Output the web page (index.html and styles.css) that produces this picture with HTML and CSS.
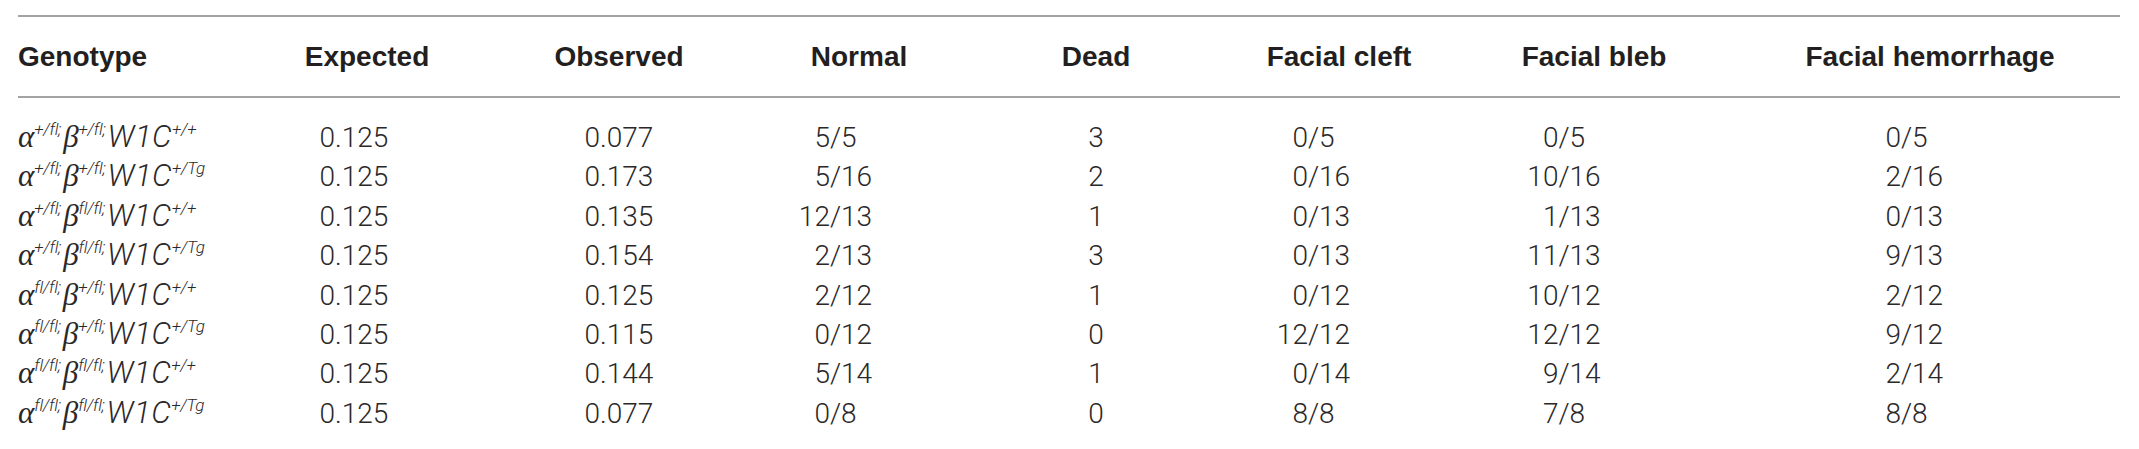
FILE: index.html
```html
<!DOCTYPE html>
<html lang="en">
<head>
<meta charset="utf-8">
<title>Genotype table</title>
<link rel="stylesheet" href="styles.css">
</head>
<body>
<table class="gt">
  <colgroup>
    <col class="c-geno"><col class="c-exp"><col class="c-obs"><col class="c-norm"><col class="c-dead"><col class="c-cleft"><col class="c-bleb"><col class="c-hem">
  </colgroup>
  <thead>
    <tr>
      <th class="h-geno">Genotype</th>
      <th>Expected</th>
      <th>Observed</th>
      <th>Normal</th>
      <th>Dead</th>
      <th>Facial cleft</th>
      <th>Facial bleb</th>
      <th>Facial hemorrhage</th>
    </tr>
  </thead>
  <tbody>
    <tr>
      <td class="geno"><span class="gr">α</span><sup>+/fl;</sup><span class="gr">β</span><sup>+/fl;</sup><span class="w">W1C</span><sup>+/+</sup></td>
      <td class="exp">0.125</td><td>0.077</td>
      <td class="norm"><span class="frac"><span class="n">5</span>/<span class="d">5</span></span></td>
      <td>3</td>
      <td class="cleft"><span class="frac"><span class="n">0</span>/<span class="d">5</span></span></td>
      <td class="bleb"><span class="frac"><span class="n">0</span>/<span class="d">5</span></span></td>
      <td class="hem"><span class="frac"><span class="n">0</span>/<span class="d">5</span></span></td>
    </tr>
    <tr>
      <td class="geno"><span class="gr">α</span><sup>+/fl;</sup><span class="gr">β</span><sup>+/fl;</sup><span class="w">W1C</span><sup>+/Tg</sup></td>
      <td class="exp">0.125</td><td>0.173</td>
      <td class="norm"><span class="frac"><span class="n">5</span>/<span class="d">16</span></span></td>
      <td>2</td>
      <td class="cleft"><span class="frac"><span class="n">0</span>/<span class="d">16</span></span></td>
      <td class="bleb"><span class="frac"><span class="n">10</span>/<span class="d">16</span></span></td>
      <td class="hem"><span class="frac"><span class="n">2</span>/<span class="d">16</span></span></td>
    </tr>
    <tr>
      <td class="geno"><span class="gr">α</span><sup>+/fl;</sup><span class="gr">β</span><sup>fl/fl;</sup><span class="w">W1C</span><sup>+/+</sup></td>
      <td class="exp">0.125</td><td>0.135</td>
      <td class="norm"><span class="frac"><span class="n">12</span>/<span class="d">13</span></span></td>
      <td>1</td>
      <td class="cleft"><span class="frac"><span class="n">0</span>/<span class="d">13</span></span></td>
      <td class="bleb"><span class="frac"><span class="n">1</span>/<span class="d">13</span></span></td>
      <td class="hem"><span class="frac"><span class="n">0</span>/<span class="d">13</span></span></td>
    </tr>
    <tr>
      <td class="geno"><span class="gr">α</span><sup>+/fl;</sup><span class="gr">β</span><sup>fl/fl;</sup><span class="w">W1C</span><sup>+/Tg</sup></td>
      <td class="exp">0.125</td><td>0.154</td>
      <td class="norm"><span class="frac"><span class="n">2</span>/<span class="d">13</span></span></td>
      <td>3</td>
      <td class="cleft"><span class="frac"><span class="n">0</span>/<span class="d">13</span></span></td>
      <td class="bleb"><span class="frac"><span class="n">11</span>/<span class="d">13</span></span></td>
      <td class="hem"><span class="frac"><span class="n">9</span>/<span class="d">13</span></span></td>
    </tr>
    <tr>
      <td class="geno"><span class="gr">α</span><sup>fl/fl;</sup><span class="gr">β</span><sup>+/fl;</sup><span class="w">W1C</span><sup>+/+</sup></td>
      <td class="exp">0.125</td><td>0.125</td>
      <td class="norm"><span class="frac"><span class="n">2</span>/<span class="d">12</span></span></td>
      <td>1</td>
      <td class="cleft"><span class="frac"><span class="n">0</span>/<span class="d">12</span></span></td>
      <td class="bleb"><span class="frac"><span class="n">10</span>/<span class="d">12</span></span></td>
      <td class="hem"><span class="frac"><span class="n">2</span>/<span class="d">12</span></span></td>
    </tr>
    <tr>
      <td class="geno"><span class="gr">α</span><sup>fl/fl;</sup><span class="gr">β</span><sup>+/fl;</sup><span class="w">W1C</span><sup>+/Tg</sup></td>
      <td class="exp">0.125</td><td>0.115</td>
      <td class="norm"><span class="frac"><span class="n">0</span>/<span class="d">12</span></span></td>
      <td>0</td>
      <td class="cleft"><span class="frac"><span class="n">12</span>/<span class="d">12</span></span></td>
      <td class="bleb"><span class="frac"><span class="n">12</span>/<span class="d">12</span></span></td>
      <td class="hem"><span class="frac"><span class="n">9</span>/<span class="d">12</span></span></td>
    </tr>
    <tr>
      <td class="geno"><span class="gr">α</span><sup>fl/fl;</sup><span class="gr">β</span><sup>fl/fl;</sup><span class="w">W1C</span><sup>+/+</sup></td>
      <td class="exp">0.125</td><td>0.144</td>
      <td class="norm"><span class="frac"><span class="n">5</span>/<span class="d">14</span></span></td>
      <td>1</td>
      <td class="cleft"><span class="frac"><span class="n">0</span>/<span class="d">14</span></span></td>
      <td class="bleb"><span class="frac"><span class="n">9</span>/<span class="d">14</span></span></td>
      <td class="hem"><span class="frac"><span class="n">2</span>/<span class="d">14</span></span></td>
    </tr>
    <tr>
      <td class="geno"><span class="gr">α</span><sup>fl/fl;</sup><span class="gr">β</span><sup>fl/fl;</sup><span class="w">W1C</span><sup>+/Tg</sup></td>
      <td class="exp">0.125</td><td>0.077</td>
      <td class="norm"><span class="frac"><span class="n">0</span>/<span class="d">8</span></span></td>
      <td>0</td>
      <td class="cleft"><span class="frac"><span class="n">8</span>/<span class="d">8</span></span></td>
      <td class="bleb"><span class="frac"><span class="n">7</span>/<span class="d">8</span></span></td>
      <td class="hem"><span class="frac"><span class="n">8</span>/<span class="d">8</span></span></td>
    </tr>
  </tbody>
</table>
</body>
</html>
```

FILE: styles.css
```css
html, body {
  margin: 0;
  padding: 0;
  background: #ffffff;
}

body {
  padding: 15px 0 0 18px;
  color: #231f20;
}

.gt {
  width: 2102px;
  table-layout: fixed;
  border-collapse: separate;
  border-spacing: 0;
}

.c-geno { width: 234px; }
.c-exp { width: 230px; }
.c-obs { width: 274px; }
.c-norm { width: 206px; }
.c-dead { width: 268px; }
.c-cleft { width: 218px; }
.c-bleb { width: 292px; }
.c-hem { width: 380px; }

.gt th {
  padding: 0;
  font-family: "Liberation Sans", Arial, sans-serif;
  font-weight: 700;
  font-size: 28px;
  line-height: 79px;
  text-align: center;
  color: #231f20;
  border-top: 2px solid #a3a3a3;
  border-bottom: 2px solid #a3a3a3;
  white-space: nowrap;
}

.gt th.h-geno {
  text-align: left;
}

.gt td {
  padding: 0;
  font-family: Roboto, "Liberation Sans", sans-serif;
  font-weight: 300;
  font-size: 28px;
  line-height: 39.4px;
  text-align: center;
  color: #2b2829;
  white-space: nowrap;
}

.gt tbody tr:first-child td {
  padding-top: 20px;
}

.gt td.geno {
  text-align: left;
  font-style: italic;
}

.gr {
  font-family: "Liberation Serif", "DejaVu Serif", serif;
  font-style: italic;
  font-weight: 400;
  font-size: 31px;
  line-height: 1;
}

.w {
  font-size: 31px;
  letter-spacing: 0.5px;
  line-height: 1;
}

.gt sup {
  font-size: 17px;
  line-height: 0;
  vertical-align: 12px;
  letter-spacing: -0.3px;
  margin-right: 2px;
}

.gt td.exp { padding-right: 26px; }
.gt td.norm { padding-right: 47px; }
.gt td.cleft { padding-right: 51px; }
.gt td.bleb { padding-right: 60px; }
.gt td.hem { padding-right: 47px; }

.frac {
  display: inline-grid;
  grid-template-columns: 1fr auto 1fr;
  width: 110px;
  vertical-align: baseline;
}

.frac .n { justify-self: end; }
.frac .d { justify-self: start; }
```
